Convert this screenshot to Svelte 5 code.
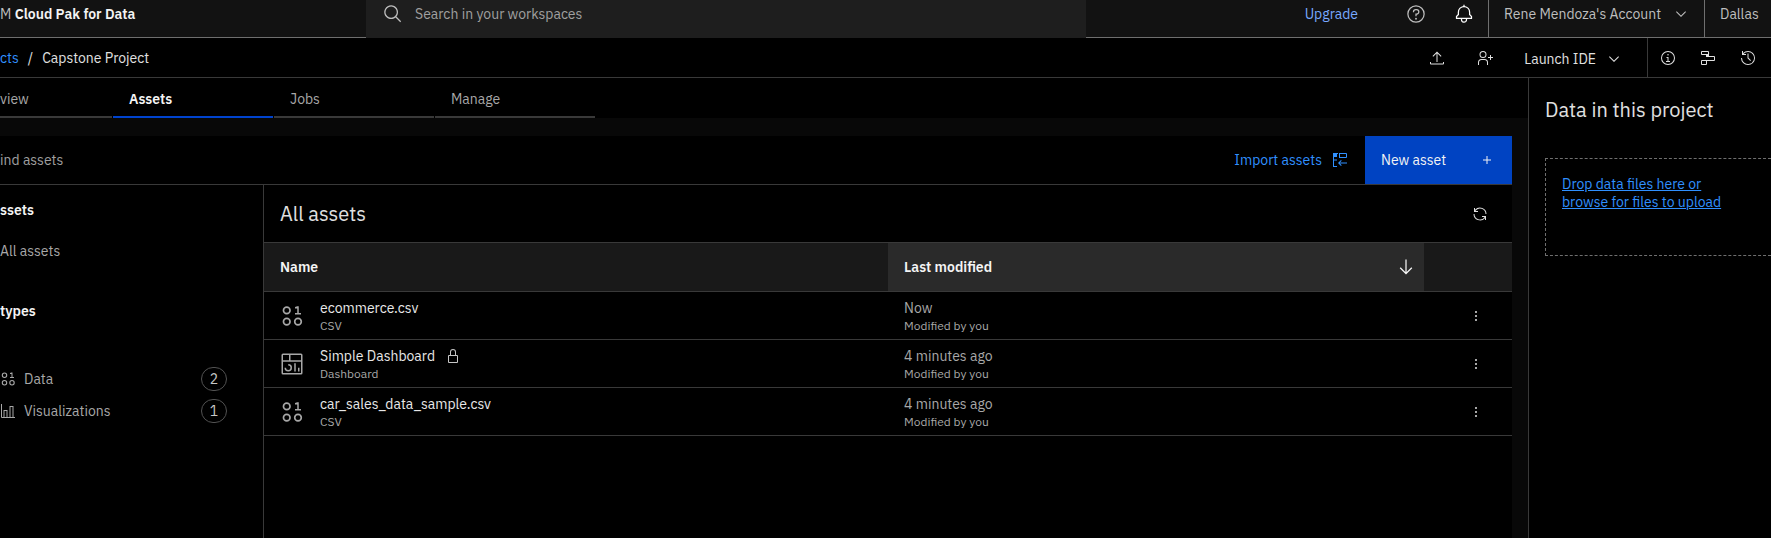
<script>
  const icons = {
    search: 'M29 27.586l-7.552-7.552a11.018 11.018 0 1 0-1.414 1.414L27.586 29ZM4 13a9 9 0 1 1 9 9a9.01 9.01 0 0 1-9-9Z',
    help: 'M16 2A14 14 0 1 0 30 16A14 14 0 0 0 16 2Zm0 26A12 12 0 1 1 28 16A12 12 0 0 1 16 28ZM16 22a1.5 1.5 0 1 0 1.5 1.5A1.5 1.5 0 0 0 16 22ZM17 8H15.5A4.49 4.49 0 0 0 11 12.5V13h2v-.5A2.5 2.5 0 0 1 15.5 10H17a2.5 2.5 0 0 1 0 5H15v4.5h2V17a4.5 4.5 0 0 0 0-9Z',
    bell: 'M28.707 19.293L26 16.586V13a10.014 10.014 0 0 0-9-9.95V1H15V3.05A10.014 10.014 0 0 0 6 13v3.586L3.293 19.293A1 1 0 0 0 3 20v3a1 1 0 0 0 1 1h7v.777a5.152 5.152 0 0 0 4.5 5.199A5.006 5.006 0 0 0 21 25V24h7a1 1 0 0 0 1-1V20A1 1 0 0 0 28.707 19.293ZM19 25a3 3 0 0 1-6 0V24h6Zm8-3H5V20.414L7.707 17.707A1 1 0 0 0 8 17V13a8 8 0 0 1 16 0v4a1 1 0 0 0 .293.707L27 20.414Z',
    chevron: 'M16 22L6 12l1.4-1.4 8.6 8.6 8.6-8.6L26 12z',
    upload: 'M7 12l1.4 1.4L15 6.8V24h2V6.8l6.6 6.6L25 12 16 3ZM2 24v3a2 2 0 0 0 2 2h24a2 2 0 0 0 2-2v-3h-2v3H4v-3Z',
    userAdd: 'M32 14h-4v-4h-2v4h-4v2h4v4h2v-4h4ZM12 4A5 5 0 1 1 7 9a5 5 0 0 1 5-5m0-2a7 7 0 1 0 7 7A7 7 0 0 0 12 2ZM22 30H20V25a5 5 0 0 0-5-5H9a5 5 0 0 0-5 5v5H2V25a7 7 0 0 1 7-7h6a7 7 0 0 1 7 7Z',
    info: 'M17 22V14H13v2h2v6H12v2h8V22ZM16 8a1.5 1.5 0 1 0 1.5 1.5A1.5 1.5 0 0 0 16 8ZM16 30A14 14 0 1 1 30 16A14 14 0 0 1 16 30ZM16 4A12 12 0 1 0 28 16A12 12 0 0 0 16 4Z',
    flow: 'M28 12H18V8a2 2 0 0 0 0-2V4a2 2 0 0 0-2-2H4a2 2 0 0 0-2 2v4a2 2 0 0 0 2 2h8v8a2 2 0 0 0 0 2H4a2 2 0 0 0-2 2v6a2 2 0 0 0 2 2h8a2 2 0 0 0 2-2v-6h14a2 2 0 0 0 2-2v-6a2 2 0 0 0-2-2ZM4 4h12v4H4ZM12 28H4v-6h8ZM28 20H12v-6h16Z',
    history: 'M20.59 22L15 16.41V7h2v8.58l5 5.01ZM16 2A13.94 13.94 0 0 0 6 6.23V2H4v8h8V8H7.08A12 12 0 1 1 4 16H2A14 14 0 1 0 16 2Z',
    renew: 'M12 10H6.78A11 11 0 0 1 27 16h2A13 13 0 0 0 6 7.68V4H4v8h8ZM20 22h5.22A11 11 0 0 1 5 16H3a13 13 0 0 0 23 8.32V28h2V20H20Z',
    arrowDown: 'M24.59 16.59L17 24.17V4H15V24.17L7.41 16.59 6 18l10 10 10-10Z',
    lock: 'M24 14H22V8A6 6 0 0 0 10 8v6H8a2 2 0 0 0-2 2V28a2 2 0 0 0 2 2H24a2 2 0 0 0 2-2V16A2 2 0 0 0 24 14ZM12 8a4 4 0 0 1 8 0v6H12ZM24 28H8V16H24Z',
    add: 'M17 15V8h-2v7H8v2h7v7h2v-7h7v-2Z',
    menu: 'M16 6a2 2 0 1 0 0 4a2 2 0 0 0 0-4ZM16 14a2 2 0 1 0 0 4a2 2 0 0 0 0-4ZM16 22a2 2 0 1 0 0 4a2 2 0 0 0 0-4Z',
    data: 'M9 3a5.5 5.5 0 1 0 0 11A5.5 5.5 0 0 0 9 3Zm0 2.2a3.3 3.3 0 1 1 0 6.600a3.3 3.3 0 0 1 0-6.600ZM9 18a5.5 5.5 0 1 0 0 11A5.5 5.5 0 0 0 9 18Zm0 2.2a3.3 3.3 0 1 1 0 6.600a3.3 3.3 0 0 1 0-6.600ZM24 18a5.5 5.5 0 1 0 0 11A5.5 5.5 0 0 0 24 18Zm0 2.2a3.3 3.3 0 1 1 0 6.600a3.3 3.3 0 0 1 0-6.600ZM25 12V3H23l-3 1v2h3v6H20V14h8v-2Z',
    chart: 'M27 28V6H19V28H15V14H7V28H4V2H2V28a2 2 0 0 0 2 2H30V28ZM13 28H9V16h4Zm12 0H21V8h4Z',
    dashboard: 'M28 2H4A2 2 0 0 0 2 4V28a2 2 0 0 0 2 2H28a2 2 0 0 0 2-2V4A2 2 0 0 0 28 2ZM28 11H14V4H28ZM12 4v7H4V4ZM4 28V13H28V28ZM24 21h2v5H24ZM19 15h2v11H19ZM11 26a5 5 0 0 1-5-5H8a3 3 0 1 0 3-3V16a5 5 0 0 1 0 10Z',
    importer: 'M4 4h6v6H4v5h6v2H4v11h6v2H2V2h10v2ZM16 2h12a2 2 0 0 1 2 2v6a2 2 0 0 1-2 2H14V2Zm0 2v6h12V4ZM18 16l-6 6 6 6 1.4-1.4L15.8 23H30V21H15.8l3.6-3.6Z'
  };

  const tabs = [
    { label: 'view', active: false },
    { label: 'Assets', active: true },
    { label: 'Jobs', active: false },
    { label: 'Manage', active: false }
  ];
  const types = [
    { label: 'Data', icon: 'data', count: 2 },
    { label: 'Visualizations', icon: 'chart', count: 1 }
  ];
  const assets = [
    { name: 'ecommerce.csv', kind: 'CSV', icon: 'data', locked: false, modified: 'Now' },
    { name: 'Simple Dashboard', kind: 'Dashboard', icon: 'dashboard', locked: true, modified: '4 minutes ago' },
    { name: 'car_sales_data_sample.csv', kind: 'CSV', icon: 'data', locked: false, modified: '4 minutes ago' }
  ];
</script>

{#snippet icon(name, size = 16)}
  <svg width={size} height={size} viewBox="0 0 32 32" fill="currentColor" aria-hidden="true"><path d={icons[name]} /></svg>
{/snippet}

<div class="app">
  <header class="topbar">
    <div class="brand">M <b>Cloud Pak for Data</b></div>
    <label class="search">
      {@render icon('search', 20)}
      <input type="search" placeholder="Search in your workspaces" aria-label="Search in your workspaces" />
    </label>
    <div class="account-tools">
      <a class="upgrade" href="#upgrade">Upgrade</a>
      <button class="tool" aria-label="Help">{@render icon('help', 20)}</button>
      <button class="tool bright" aria-label="Notifications">{@render icon('bell', 20)}</button>
      <button class="account">Rene Mendoza's Account {@render icon('chevron')}</button>
      <button class="region">Dallas</button>
    </div>
  </header>

  <div class="crumbbar">
    <nav class="crumbs" aria-label="Breadcrumb">
      <a href="#projects">cts</a><span>/</span><span>Capstone Project</span>
    </nav>
    <div class="actions">
      <button class="tool" aria-label="Upload">{@render icon('upload')}</button>
      <button class="tool" aria-label="Add collaborators">{@render icon('userAdd')}</button>
      <button class="launch">Launch IDE {@render icon('chevron')}</button>
      <div class="panels">
        <button aria-label="Information">{@render icon('info')}</button>
        <button aria-label="Flow">{@render icon('flow')}</button>
        <button aria-label="History">{@render icon('history')}</button>
      </div>
    </div>
  </div>

  <div class="body">
    <main>
      <nav class="tabs" aria-label="Project">
        {#each tabs as tab}
          <button class="tab" class:active={tab.active}>{tab.label}</button>
        {/each}
      </nav>

      <div class="content">
        <div class="toolbar">
          <input type="text" placeholder="ind assets" aria-label="Find assets" />
          <button class="import">Import assets {@render icon('importer')}</button>
          <button class="new">New asset {@render icon('add')}</button>
        </div>

        <div class="split">
          <aside class="filters">
            <h3>ssets</h3>
            <a class="all" href="#all">All assets</a>
            <h3>types</h3>
            <ul>
              {#each types as type}
                <li>
                  {@render icon(type.icon)}
                  <a href="#type">{type.label}</a>
                  <span class="count">{type.count}</span>
                </li>
              {/each}
            </ul>
          </aside>

          <section class="assets">
            <div class="heading">
              <h2>All assets</h2>
              <button aria-label="Refresh">{@render icon('renew')}</button>
            </div>
            <table>
              <thead>
                <tr>
                  <th class="name">Name</th>
                  <th class="sorted"><button>Last modified {@render icon('arrowDown', 20)}</button></th>
                  <th class="more"></th>
                </tr>
              </thead>
              <tbody>
                {#each assets as asset}
                  <tr>
                    <td>
                      <div class="asset">
                        {@render icon(asset.icon, 24)}
                        <div>
                          <a href="#asset">{asset.name}{#if asset.locked}{@render icon('lock')}{/if}</a>
                          <small>{asset.kind}</small>
                        </div>
                      </div>
                    </td>
                    <td>
                      <span class="when">{asset.modified}</span>
                      <small>Modified by you</small>
                    </td>
                    <td class="more"><button aria-label="Options">{@render icon('menu')}</button></td>
                  </tr>
                {/each}
              </tbody>
            </table>
          </section>
        </div>
      </div>
    </main>

    <aside class="data-panel">
      <h2>Data in this project</h2>
      <div class="dropzone">
        <a href="#upload">Drop data files here or<br />browse for files to upload</a>
      </div>
    </aside>
  </div>
</div>

<style>
  :global(body) {
    background: #000;
  }
  :global(#app *) {
    box-sizing: border-box;
  }
  .app {
    min-height: 100vh;
    display: flex;
    flex-direction: column;
    overflow: hidden;
    background: #000;
    color: #e0e0e0;
    font: 14px/18px 'IBM Plex Sans', 'Noto Sans', sans-serif;
  }
  button,
  input {
    border: 0;
    padding: 0;
    background: none;
    color: inherit;
    font: inherit;
    outline: none;
    white-space: nowrap;
  }
  input::placeholder {
    color: #a0a0a0;
    opacity: 1;
  }
  button {
    display: flex;
    align-items: center;
    justify-content: center;
  }
  a {
    color: inherit;
    text-decoration: none;
  }
  svg {
    display: block;
    flex: none;
  }
  h2,
  h3,
  ul {
    margin: 0;
    padding: 0;
    font-weight: 400;
  }
  h2 {
    font-size: 20px;
    line-height: 28px;
  }

  .topbar {
    display: flex;
    height: 38px;
    background: #121212;
    color: #bebebe;
  }
  .brand {
    flex: 0 0 366px;
    padding-top: 5px;
    border-bottom: 1px solid #6f6f6f;
  }
  .brand b {
    font-weight: 600;
    color: #f4f4f4;
  }
  .search {
    flex: 1;
    display: flex;
    align-items: flex-start;
    gap: 12px;
    padding: 4px 17px;
    background: #1e1e1e;
  }
  .search input {
    flex: 1;
    height: 20px;
  }
  .account-tools {
    flex: 0 0 685px;
    display: flex;
    justify-content: flex-end;
    border-bottom: 1px solid #6f6f6f;
  }
  .account-tools > * {
    height: 37px;
    padding-bottom: 9px;
  }
  .upgrade {
    padding-top: 5px;
    margin-right: 34px;
    color: #78a9ff;
  }
  .tool {
    width: 48px;
  }
  .bright {
    color: #fff;
  }
  .account {
    justify-content: space-between;
    width: 216px;
    padding: 0 15px 9px;
    border-left: 1px solid #6f6f6f;
  }
  .region {
    justify-content: flex-start;
    width: 67px;
    padding-left: 15px;
    border-left: 1px solid #6f6f6f;
  }

  .crumbbar {
    display: flex;
    justify-content: space-between;
    height: 40px;
    border-bottom: 1px solid #393939;
  }
  .crumbs {
    display: flex;
    align-items: center;
    gap: 9px;
  }
  .crumbs a {
    color: #3090ff;
  }
  .actions,
  .panels {
    display: flex;
  }
  .launch {
    gap: 10px;
    padding: 2px 25px 0 15px;
  }
  .panels {
    border-left: 1px solid #393939;
    width: 124px;
  }
  .panels button {
    width: 40px;
  }

  .body {
    flex: 1;
    display: flex;
  }
  main {
    flex: 1;
    display: flex;
    flex-direction: column;
    background: #080808;
  }
  .tabs {
    display: flex;
    gap: 1px;
    background: #000;
  }
  .tab {
    width: 160px;
    height: 40px;
    padding: 4px 0 0 16px;
    justify-content: flex-start;
    border-bottom: 2px solid #393939;
    color: #a8a8a8;
  }
  .tab:first-child {
    width: 112px;
    padding-left: 0;
  }
  .tab.active {
    border-color: #0043ce;
    color: #f4f4f4;
    font-weight: 600;
  }
  .content {
    flex: 1;
    display: flex;
    flex-direction: column;
    margin: 18px 16px 0 0;
    background: #000;
  }
  .toolbar {
    display: flex;
    height: 49px;
    border-bottom: 1px solid #393939;
  }
  .toolbar input {
    flex: 1;
  }
  .import {
    gap: 10px;
    padding: 0 17px;
    color: #3090ff;
  }
  .new {
    justify-content: space-between;
    width: 147px;
    padding: 0 17px 0 16px;
    background: #0043c2;
    color: #f4f4f4;
  }
  .split {
    flex: 1;
    display: flex;
  }
  .filters {
    flex: 0 0 264px;
    padding-top: 16px;
    border-right: 1px solid #393939;
    color: #a8a8a8;
  }
  .filters h3 {
    font-size: 14px;
    font-weight: 600;
    color: #f4f4f4;
  }
  .all {
    display: block;
    margin: 23px 0 42px;
  }
  .filters ul {
    margin-top: 43px;
    list-style: none;
  }
  .filters li {
    display: flex;
    align-items: center;
    height: 32px;
    padding-right: 36px;
    gap: 8px;
  }
  .filters li a {
    flex: 1;
  }
  .count {
    width: 26px;
    border: 1px solid #525252;
    border-radius: 12px;
    color: #c6c6c6;
    line-height: 22px;
    text-align: center;
  }

  .assets {
    flex: 1;
  }
  .heading {
    display: flex;
    align-items: center;
    justify-content: space-between;
    height: 57px;
    padding: 0 24px 0 16px;
  }
  table {
    width: 100%;
    border-collapse: separate;
    border-spacing: 0;
    table-layout: fixed;
  }
  th,
  td {
    height: 48px;
    padding: 0 16px;
    border-bottom: 1px solid #393939;
    text-align: left;
  }
  td {
    padding-top: 2px;
  }
  th {
    height: 50px;
    border-top: 1px solid #393939;
    background: #191919;
    color: #f4f4f4;
    font-weight: 600;
  }
  .name {
    width: 50%;
  }
  .sorted {
    padding: 0 8px 0 16px;
    background: #2a2a2a;
  }
  .sorted button {
    width: 100%;
    justify-content: space-between;
  }
  .more {
    width: 88px;
    padding: 0 28px 0 44px;
  }
  .asset {
    display: flex;
    align-items: center;
    gap: 16px;
    color: #a8a8a8;
  }
  .asset > :global(svg) {
    margin-bottom: 2px;
  }
  .asset a {
    display: flex;
    align-items: center;
    gap: 10px;
    color: #e8e8e8;
  }
  .asset a svg {
    color: #c6c6c6;
  }
  .when,
  small {
    display: block;
    color: #a8a8a8;
  }
  small {
    font-size: 12px;
    line-height: 18px;
  }

  .data-panel {
    flex: 0 0 243px;
    padding: 18px 0 0 16px;
    border-left: 1px solid #393939;
  }
  .dropzone {
    height: 98px;
    margin-top: 34px;
    padding: 16px;
    border: 1px dashed #6f6f6f;
    border-right: 0;
  }
  .dropzone a {
    color: #3090ff;
    text-decoration: underline;
    white-space: nowrap;
  }
</style>
